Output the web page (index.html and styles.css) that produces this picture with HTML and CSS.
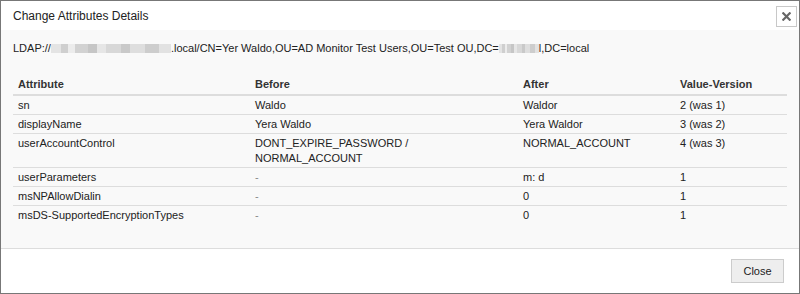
FILE: index.html
```html
<!DOCTYPE html>
<html lang="en">
<head>
    <meta charset="UTF-8">
    <title>Change Attributes Details</title>
    <link rel="stylesheet" href="styles.css">
</head>
<body>
    <div class="dialog">
        <div class="dialog-header">
            <span class="dialog-title">Change Attributes Details</span>
            <button class="close-x" title="Close">
                <svg width="9" height="9" viewBox="0 0 9 9">
                    <path d="M1.3 1.3 L7.7 7.7 M7.7 1.3 L1.3 7.7" stroke="#666" stroke-width="2.2" stroke-linecap="square"/>
                </svg>
            </button>
        </div>
        <div class="dialog-body">
            <p class="dn">LDAP://<span class="blur blur-host"></span>.local/CN=Yer Waldo,OU=AD Monitor Test Users,OU=Test OU,DC=<span class="blur blur-dc"></span>l,DC=local</p>
            <table class="changes">
                <thead>
                    <tr>
                        <th class="col-attr">Attribute</th>
                        <th class="col-before">Before</th>
                        <th class="col-after">After</th>
                        <th>Value-Version</th>
                    </tr>
                </thead>
                <tbody>
                    <tr><td>sn</td><td>Waldo</td><td>Waldor</td><td>2 (was 1)</td></tr>
                    <tr><td>displayName</td><td>Yera Waldo</td><td>Yera Waldor</td><td>3 (was 2)</td></tr>
                    <tr><td>userAccountControl</td><td>DONT_EXPIRE_PASSWORD /<br>NORMAL_ACCOUNT</td><td>NORMAL_ACCOUNT</td><td>4 (was 3)</td></tr>
                    <tr><td>userParameters</td><td class="empty">-</td><td>m: d</td><td>1</td></tr>
                    <tr><td>msNPAllowDialin</td><td class="empty">-</td><td>0</td><td>1</td></tr>
                    <tr><td>msDS-SupportedEncryptionTypes</td><td class="empty">-</td><td>0</td><td>1</td></tr>
                </tbody>
            </table>
        </div>
        <div class="dialog-footer">
            <button class="btn">Close</button>
        </div>
    </div>
</body>
</html>
```
FILE: styles.css
```css
* {
    box-sizing: border-box;
}

body {
    margin: 0;
    font-family: "Liberation Sans", Arial, sans-serif;
    font-size: 11px;
    color: #222;
}

.dialog {
    width: 800px;
    height: 294px;
    border: 1px solid #777;
    background: #fff;
    display: flex;
    flex-direction: column;
}

.dialog-header {
    height: 29px;
    padding: 0 2px 0 12px;
    display: flex;
    align-items: center;
    justify-content: space-between;
}

.dialog-title {
    font-size: 12px;
    color: #222;
}

.close-x {
    width: 21px;
    height: 21px;
    padding: 0;
    border: 1px solid #c8c8c8;
    background: #fff;
    display: flex;
    align-items: center;
    justify-content: center;
    margin-top: 1px;
}

.dialog-body {
    flex: 1;
    background: #f9f9f9;
    border-bottom: 1px solid #ddd;
    padding: 0 12px;
}

.dn {
    margin: 11px 0 20px;
    line-height: 14px;
}

.blur {
    display: inline-block;
    height: 9px;
    vertical-align: -1px;
    background: linear-gradient(90deg, #e4e4e4 0 8%, #cfcfcf 8% 14%, #ececec 14% 20%, #d2d2d2 20% 31%, #c6c6c6 31% 38%, #e6e6e6 38% 46%, #d8d8d8 46% 58%, #c9c9c9 58% 66%, #dedede 66% 78%, #cdcdcd 78% 90%, #e2e2e2 90%);
}

.blur-host {
    width: 120px;
}

.blur-dc {
    width: 40px;
}

.changes {
    width: 100%;
    border-collapse: collapse;
}

.changes th {
    text-align: left;
    font-weight: bold;
    color: #333;
    padding: 2px 5px 2px;
    line-height: 15px;
    border-bottom: 2px solid #ddd;
}

.changes td {
    padding: 2px 5px 1px;
    line-height: 15px;
    vertical-align: top;
    border-bottom: 1px solid #ddd;
}

.changes tbody tr:last-child td {
    border-bottom: none;
}

.col-attr {
    width: 237px;
}

.col-before {
    width: 268px;
}

.col-after {
    width: 157px;
}

.empty {
    color: #888;
}

.dialog-footer {
    height: 44px;
    display: flex;
    align-items: center;
    justify-content: flex-end;
    padding: 0 15px;
}

.btn {
    font-family: "Liberation Sans", Arial, sans-serif;
    font-size: 11px;
    color: #222;
    background: #eee;
    border: 1px solid #ccc;
    height: 24px;
    width: 53px;
    padding: 0;
}
```
